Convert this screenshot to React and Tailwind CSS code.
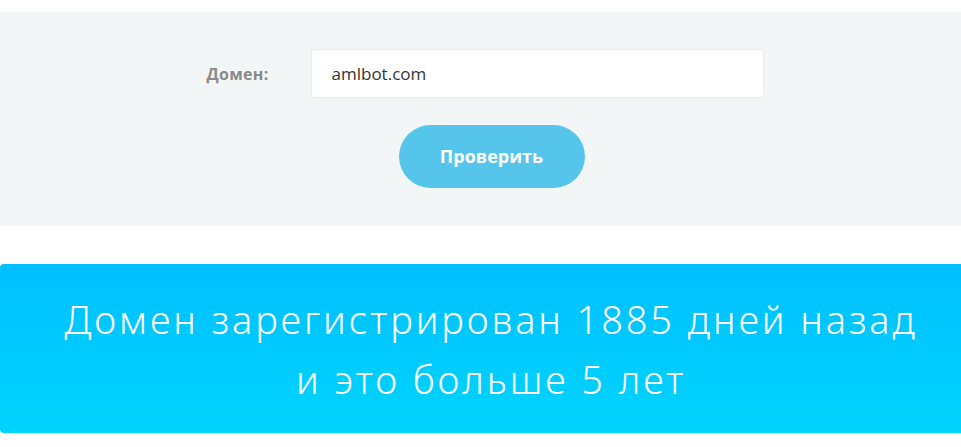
import React from 'react';

export default function App() {
  return (
    <div className="min-h-screen bg-white pt-3 overflow-hidden" style={{ fontFamily: '"Open Sans", Lato, sans-serif' }}>
      <section className="bg-[#f3f6f7] h-[214px] flex flex-col items-center pt-[37px]">
        <div className="flex items-center w-[558px] ml-[10px]">
          <label htmlFor="domain" className="w-[104px] shrink-0 text-[16px] font-bold text-[#8a8a8a] tracking-[0.3px]">
            Домен:
          </label>
          <input
            id="domain"
            type="text"
            defaultValue="amlbot.com"
            className="w-[453px] h-[49px] bg-white border border-[#e8ecee] rounded-[3px] px-5 text-[17px] text-[#333] outline-none"
          />
        </div>
        <button
          type="button"
          className="mt-[27px] ml-[22px] w-[186px] h-[63px] rounded-full bg-[#55c5ec] text-white text-[18px] font-bold"
        >
          Проверить
        </button>
      </section>
      <div className="mt-[38px] w-[982px] h-[169px] rounded-l-[4px] bg-gradient-to-b from-[#00bfff] to-[#00d4fd] flex items-center justify-center">
        <p
          className="text-white text-center text-[38px] leading-[60px] font-light tracking-[2.9px]"
          style={{ fontFamily: '"Noto Sans", sans-serif' }}
        >
          Домен зарегистрирован 1885 дней назад
          <br />
          и это больше 5 лет
        </p>
      </div>
    </div>
  );
}
